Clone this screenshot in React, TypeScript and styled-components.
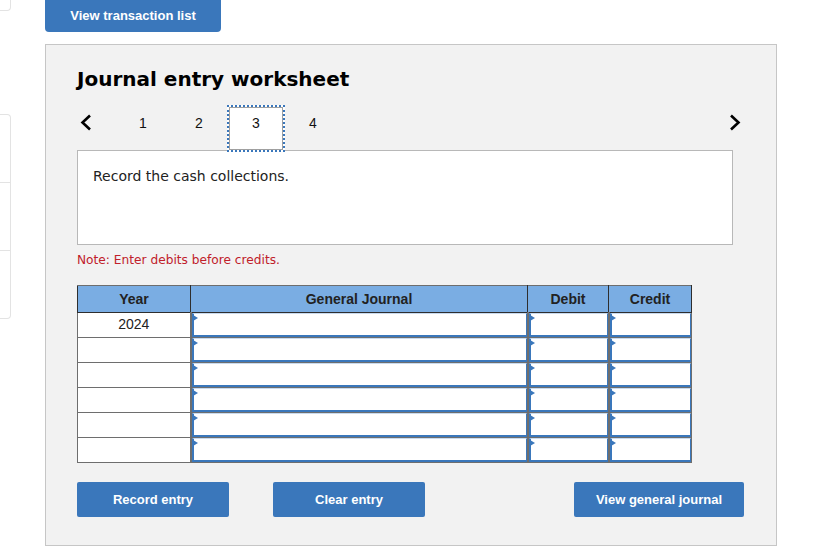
import React from "react";
import styled, { createGlobalStyle } from "styled-components";

const GlobalStyle = createGlobalStyle`
  body {
    margin: 0;
    background: #fff;
    font-family: "Liberation Sans", Arial, sans-serif;
  }
`;

const Page = styled.div`
  display: flex;
  flex-direction: row;
  width: 827px;
  height: 552px;
`;

const Sidebar = styled.div`
  display: flex;
  flex-direction: column;
  width: 11px;
  flex: 0 0 auto;
`;

const TopStub = styled.div`
  height: 10px;
  border-right: 1px solid #e3e3e3;
  border-bottom: 1px solid #e3e3e3;
  border-bottom-right-radius: 4px;
`;

const StubStack = styled.div`
  margin-top: 103px;
  border: 1px solid #e3e3e3;
  border-left: none;
  border-radius: 0 4px 4px 0;
  display: flex;
  flex-direction: column;
`;

const Stub = styled.div<{ $last?: boolean }>`
  height: 67px;
  border-bottom: ${(p) => (p.$last ? "none" : "1px solid #e3e3e3")};
`;

const Main = styled.div`
  margin-left: 34px;
  display: flex;
  flex-direction: column;
`;

const BlueButton = styled.button<{ $width: number }>`
  width: ${(p) => p.$width}px;
  height: 35px;
  background: #3a77bb;
  color: #fff;
  border: none;
  border-radius: 2px;
  font-family: "Liberation Sans", Arial, sans-serif;
  font-weight: bold;
  font-size: 13px;
  padding: 0;
  cursor: pointer;
`;

const TopButton = styled(BlueButton)`
  height: 32px;
  border-radius: 0 0 4px 4px;
  padding-bottom: 2px;
`;

const Panel = styled.div`
  margin-top: 12px;
  width: 732px;
  height: 502px;
  box-sizing: border-box;
  background: #f2f2f2;
  border: 1px solid #c6c6c6;
  padding: 22px 32px 0 31px;
  display: flex;
  flex-direction: column;
`;

const Title = styled.h2`
  margin: 0;
  font-family: "DejaVu Sans", Verdana, sans-serif;
  font-weight: bold;
  font-size: 20px;
  line-height: 24px;
  color: #000;
`;

const Nav = styled.div`
  margin-top: 14px;
  height: 45px;
  display: flex;
  align-items: flex-start;
`;

const Arrow = styled.div<{ $right?: boolean }>`
  width: 38px;
  padding-top: 9px;
  display: flex;
  justify-content: ${(p) => (p.$right ? "flex-end" : "flex-start")};
  padding-left: ${(p) => (p.$right ? 0 : 3)}px;
  padding-right: ${(p) => (p.$right ? 3 : 0)}px;
  box-sizing: border-box;
  margin-left: ${(p) => (p.$right ? "auto" : 0)};
`;

const Tab = styled.div<{ $active?: boolean }>`
  width: ${(p) => (p.$active ? 58 : 56)}px;
  height: ${(p) => (p.$active ? 47 : 45)}px;
  box-sizing: border-box;
  text-align: center;
  font-size: 14px;
  line-height: 17px;
  padding-top: ${(p) => (p.$active ? 8 : 10)}px;
  color: #111;
  position: relative;
  z-index: 1;
  background: ${(p) => (p.$active ? "#fff" : "transparent")};
  border: ${(p) => (p.$active ? "2px dotted #3a77bb" : "none")};
  box-shadow: ${(p) => (p.$active ? "inset 0 0 0 1px #a0a0a0" : "none")};
`;

const Prompt = styled.div`
  width: 656px;
  height: 95px;
  box-sizing: border-box;
  background: #fff;
  border: 1px solid #b8b8b8;
  padding: 16px 15px 0;
  font-family: "DejaVu Sans", Verdana, sans-serif;
  font-size: 14px;
  line-height: 18px;
  color: #222;
`;

const Note = styled.div`
  margin-top: 7px;
  font-family: "DejaVu Sans", Verdana, sans-serif;
  font-size: 12.2px;
  line-height: 16px;
  color: #c0202a;
`;

const Table = styled.table`
  margin-top: 17px;
  border-collapse: collapse;
  table-layout: fixed;
  width: 614px;
  border: 1px solid #6e6e6e;
`;

const Th = styled.th`
  height: 26px;
  padding: 0;
  background: #7aade3;
  border: 1px solid #2e2e2e;
  border-top-color: #6e6e6e;
  font-size: 14px;
  font-weight: bold;
  color: #222;
  text-align: center;
`;

const YearCell = styled.td`
  height: 24px;
  padding: 0;
  border: 1px solid #6e6e6e;
  background: #fff;
  font-size: 14px;
  color: #222;
  text-align: center;
  vertical-align: top;
  line-height: 22px;
`;

const InputCell = styled.td`
  height: 24px;
  padding: 0;
  border: 1px solid #6e6e6e;
  border-left-width: 2px;
  background: #f2f2f2;
`;

const Field = styled.div`
  position: relative;
  height: 24px;
  box-sizing: border-box;
  background: #fff;
  border: 1px solid #3a77bb;
  border-left-width: 2px;
  border-bottom-width: 2px;
  border-top-color: #c9dbef;

  &::before {
    content: "";
    position: absolute;
    left: -1px;
    top: 1px;
    border-left: 5px solid #3a77bb;
    border-top: 3px solid transparent;
    border-bottom: 3px solid transparent;
  }
`;

const ButtonRow = styled.div`
  margin-top: 19px;
  display: flex;
  align-items: center;
`;

const Spacer = styled.div`
  flex: 1 1 auto;
`;

function Chevron({ right }: { right?: boolean }) {
  return (
    <svg width="12" height="17" viewBox="0 0 12 17">
      <path
        d={right ? "M2 1.5 L9.5 8.5 L2 15.5" : "M10 1.5 L2.5 8.5 L10 15.5"}
        fill="none"
        stroke="#000"
        strokeWidth="2.6"
      />
    </svg>
  );
}

const rows = ["2024", "", "", "", "", ""];

export default function App() {
  return (
    <Page>
      <GlobalStyle />
      <Sidebar>
        <TopStub />
        <StubStack>
          <Stub />
          <Stub />
          <Stub $last />
        </StubStack>
      </Sidebar>
      <Main>
        <TopButton $width={176}>View transaction list</TopButton>
        <Panel>
          <Title>Journal entry worksheet</Title>
          <Nav>
            <Arrow>
              <Chevron />
            </Arrow>
            <Tab>1</Tab>
            <Tab>2</Tab>
            <Tab $active>3</Tab>
            <Tab>4</Tab>
            <Arrow $right>
              <Chevron right />
            </Arrow>
          </Nav>
          <Prompt>Record the cash collections.</Prompt>
          <Note>Note: Enter debits before credits.</Note>
          <Table>
            <colgroup>
              <col style={{ width: 113 }} />
              <col style={{ width: 337 }} />
              <col style={{ width: 81 }} />
              <col style={{ width: 83 }} />
            </colgroup>
            <thead>
              <tr>
                <Th>Year</Th>
                <Th>General Journal</Th>
                <Th>Debit</Th>
                <Th>Credit</Th>
              </tr>
            </thead>
            <tbody>
              {rows.map((year, i) => (
                <tr key={i}>
                  <YearCell>{year}</YearCell>
                  <InputCell>
                    <Field />
                  </InputCell>
                  <InputCell>
                    <Field />
                  </InputCell>
                  <InputCell>
                    <Field />
                  </InputCell>
                </tr>
              ))}
            </tbody>
          </Table>
          <ButtonRow>
            <BlueButton $width={152}>Record entry</BlueButton>
            <BlueButton $width={152} style={{ marginLeft: 44 }}>
              Clear entry
            </BlueButton>
            <Spacer />
            <BlueButton $width={170}>View general journal</BlueButton>
          </ButtonRow>
        </Panel>
      </Main>
    </Page>
  );
}
